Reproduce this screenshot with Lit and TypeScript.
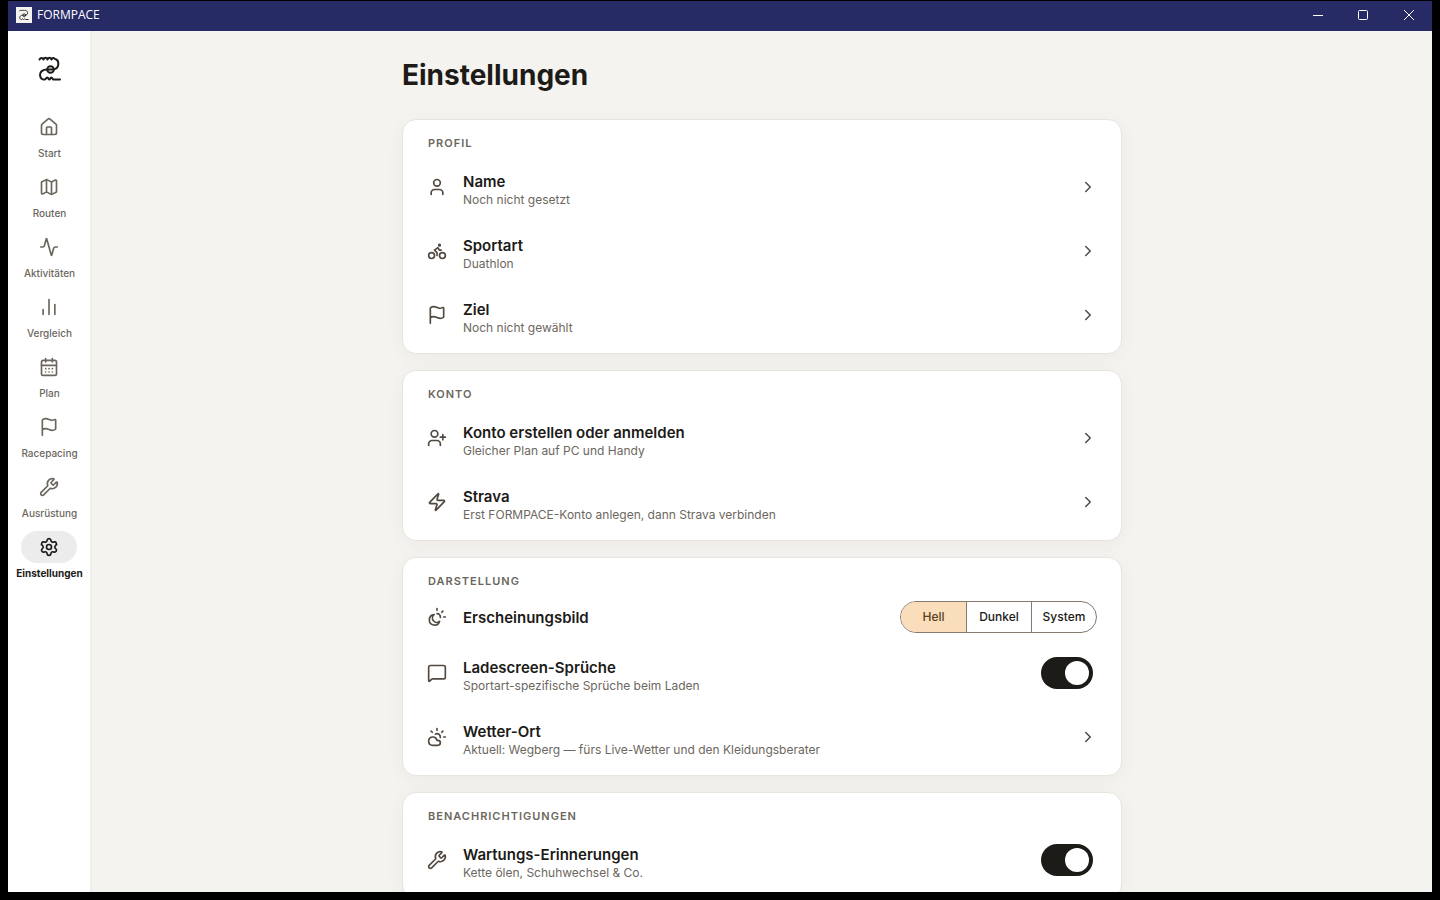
import { LitElement, html, css, svg, nothing } from "lit";
import { customElement, property, state } from "lit/decorators.js";

const sun = svg`<path d="M12 2v2"/><path d="m19.07 4.93-1.41 1.41"/><path d="M20 12h2"/>`;

const ICONS: Record<string, unknown> = {
  house: svg`<path d="M15 21v-8a1 1 0 0 0-1-1h-4a1 1 0 0 0-1 1v8"/><path d="M3 10a2 2 0 0 1 .709-1.528l7-5.999a2 2 0 0 1 2.582 0l7 5.999A2 2 0 0 1 21 10v9a2 2 0 0 1-2 2H5a2 2 0 0 1-2-2z"/>`,
  map: svg`<path d="M14.106 5.553a2 2 0 0 0 1.788 0l3.659-1.83A1 1 0 0 1 21 4.619v12.764a1 1 0 0 1-.553.894l-4.553 2.277a2 2 0 0 1-1.788 0l-4.212-2.106a2 2 0 0 0-1.788 0l-3.659 1.83A1 1 0 0 1 3 19.381V6.618a1 1 0 0 1 .553-.894l4.553-2.277a2 2 0 0 1 1.788 0z"/><path d="M15 5.764v15"/><path d="M9 3.236v15"/>`,
  activity: svg`<path d="M22 12h-2.48a2 2 0 0 0-1.93 1.46l-2.35 8.36a.25.25 0 0 1-.48 0L9.24 2.18a.25.25 0 0 0-.48 0l-2.35 8.36A2 2 0 0 1 4.49 12H2"/>`,
  chart: svg`<path d="M5 21v-6"/><path d="M12 21V3"/><path d="M19 21V9"/>`,
  calendar: svg`<path d="M8 2v4"/><path d="M16 2v4"/><rect width="18" height="18" x="3" y="4" rx="2"/><path d="M3 10h18"/><path d="M8 14h.01"/><path d="M12 14h.01"/><path d="M16 14h.01"/><path d="M8 18h.01"/><path d="M12 18h.01"/><path d="M16 18h.01"/>`,
  flag: svg`<path d="M4 22V4a1 1 0 0 1 .4-.8A6 6 0 0 1 8 2c3 0 5 2 7.333 2q2 0 3.067-.8A1 1 0 0 1 20 4v10a1 1 0 0 1-.4.8A6 6 0 0 1 16 16c-3 0-5-2-8-2a6 6 0 0 0-4 1.528"/>`,
  wrench: svg`<path d="M14.7 6.3a1 1 0 0 0 0 1.4l1.6 1.6a1 1 0 0 0 1.4 0l3.106-3.105c.32-.322.863-.22.983.218a6 6 0 0 1-8.259 7.057l-7.91 7.91a1 1 0 0 1-2.999-3l7.91-7.91a6 6 0 0 1 7.057-8.259c.438.12.54.662.219.984z"/>`,
  settings: svg`<path d="M9.671 4.136a2.34 2.34 0 0 1 4.659 0 2.34 2.34 0 0 0 3.319 1.915 2.34 2.34 0 0 1 2.33 4.033 2.34 2.34 0 0 0 0 3.831 2.34 2.34 0 0 1-2.33 4.033 2.34 2.34 0 0 0-3.319 1.915 2.34 2.34 0 0 1-4.659 0 2.34 2.34 0 0 0-3.32-1.915 2.34 2.34 0 0 1-2.33-4.033 2.34 2.34 0 0 0 0-3.831A2.34 2.34 0 0 1 6.35 6.051a2.34 2.34 0 0 0 3.319-1.915"/><circle cx="12" cy="12" r="3"/>`,
  user: svg`<path d="M19 21v-2a4 4 0 0 0-4-4H9a4 4 0 0 0-4 4v2"/><circle cx="12" cy="7" r="4"/>`,
  bike: svg`<circle cx="18.5" cy="17.5" r="3.5"/><circle cx="5.5" cy="17.5" r="3.5"/><circle cx="15" cy="5" r="1"/><path d="M12 17.5V14l-3-3 4-3 2 3h2"/>`,
  userPlus: svg`<path d="M16 21v-2a4 4 0 0 0-4-4H6a4 4 0 0 0-4 4v2"/><circle cx="9" cy="7" r="4"/><path d="M19 8v6"/><path d="M22 11h-6"/>`,
  zap: svg`<path d="M4 14a1 1 0 0 1-.78-1.63l9.9-10.2a.5.5 0 0 1 .86.46l-1.92 6.02A1 1 0 0 0 13 10h7a1 1 0 0 1 .78 1.63l-9.9 10.2a.5.5 0 0 1-.86-.46l1.92-6.02A1 1 0 0 0 11 14z"/>`,
  sunMoon: svg`${sun}<path d="M16 12.600a4 4 0 0 0-4-4.600"/><path d="M8.500 9.100a6.300 6.300 0 1 0 6.600 8.200 5.200 5.200 0 0 1-6.600-8.200z"/>`,
  message: svg`<path d="M22 17a2 2 0 0 1-2 2H6.828a2 2 0 0 0-1.414.586l-2.202 2.202A.71.71 0 0 1 2 21.286V5a2 2 0 0 1 2-2h16a2 2 0 0 1 2 2z"/>`,
  cloudSun: svg`${sun}<path d="m4.930 4.930 1.410 1.410"/><path d="M15.947 12.650a4 4 0 0 0-5.925-4.128"/><path d="M13 22H7a5 5 0 1 1 4.900-6H13a3 3 0 0 1 0 6Z"/>`,
  chevron: svg`<path d="m9 18 6-6-6-6"/>`,
};

const icon = (name: string, size = 20) => html`<svg
  width=${size} height=${size} viewBox="0 0 24 24" fill="none" stroke="currentColor"
  stroke-width="2" stroke-linecap="round" stroke-linejoin="round" aria-hidden="true"
>${ICONS[name]}</svg>`;

const logo = (size: number) => html`<svg
  width=${size} height=${size} viewBox="0 0 28 28" fill="none" stroke="currentColor"
  stroke-width="2" stroke-linecap="round" stroke-linejoin="round" aria-hidden="true"
><path d="M3.500 4.500C4.500 2.500 6.500 2.200 7.500 4.500C8.500 2.200 10.500 2.200 11.500 4.500C12.500 2.200 14.500 2.200 15.500 4.500C16.500 2.500 18 2.500 19 4C21.500 4.500 22.500 7 22.300 9.500C22 13 19.500 14.500 16 14.500H11C6.500 14.500 3.800 17 4 20C4.200 23.500 6.500 25 9 24.500C10 24.500 10 22.500 11.300 22.500C12.500 22.500 12.300 24.500 13.300 24.500C14.300 24.500 14.200 22.500 15.300 22.500C16.500 22.500 16.300 24.500 17.500 24.500H24"/><circle cx="14.500" cy="14.500" r="3.300"/></svg>`;

interface Row {
  icon: string;
  title: string;
  sub?: string;
  kind: "link" | "toggle" | "theme";
}

const SECTIONS: { label: string; rows: Row[] }[] = [
  {
    label: "PROFIL",
    rows: [
      { icon: "user", title: "Name", sub: "Noch nicht gesetzt", kind: "link" },
      { icon: "bike", title: "Sportart", sub: "Duathlon", kind: "link" },
      { icon: "flag", title: "Ziel", sub: "Noch nicht gewählt", kind: "link" },
    ],
  },
  {
    label: "KONTO",
    rows: [
      { icon: "userPlus", title: "Konto erstellen oder anmelden", sub: "Gleicher Plan auf PC und Handy", kind: "link" },
      { icon: "zap", title: "Strava", sub: "Erst FORMPACE-Konto anlegen, dann Strava verbinden", kind: "link" },
    ],
  },
  {
    label: "DARSTELLUNG",
    rows: [
      { icon: "sunMoon", title: "Erscheinungsbild", kind: "theme" },
      { icon: "message", title: "Ladescreen-Sprüche", sub: "Sportart-spezifische Sprüche beim Laden", kind: "toggle" },
      { icon: "cloudSun", title: "Wetter-Ort", sub: "Aktuell: Wegberg — fürs Live-Wetter und den Kleidungsberater", kind: "link" },
    ],
  },
  {
    label: "BENACHRICHTIGUNGEN",
    rows: [
      { icon: "wrench", title: "Wartungs-Erinnerungen", sub: "Kette ölen, Schuhwechsel & Co.", kind: "toggle" },
    ],
  },
];

const NAV = [
  ["house", "Start"],
  ["map", "Routen"],
  ["activity", "Aktivitäten"],
  ["chart", "Vergleich"],
  ["calendar", "Plan"],
  ["flag", "Racepacing"],
  ["wrench", "Ausrüstung"],
  ["settings", "Einstellungen"],
];

@customElement("title-bar")
export class TitleBar extends LitElement {
  static styles = css`
    :host {
      display: flex;
      align-items: center;
      height: 30px;
      flex: none;
      padding-left: 8px;
      background: #262b66;
      color: #fff;
      font: 12px/16px "Open Sans", "Noto Sans", sans-serif;
    }
    .badge {
      display: grid;
      place-items: center;
      width: 16px;
      height: 16px;
      margin-right: 5px;
      background: #f5f3ef;
      color: #1c1b18;
    }
    .name { flex: 1; }
    .badge, .name { margin-bottom: 2px; }
    .control {
      display: grid;
      place-items: center;
      width: 46px;
      height: 30px;
      padding: 0 0 2px;
      border: 0;
      background: none;
      color: inherit;
    }
  `;

  render() {
    const glyph = (label: string, shape: unknown) => html`<button class="control" aria-label=${label}>
      <svg width="12" height="12" viewBox="0 0 12 12" fill="none" stroke="currentColor">${shape}</svg>
    </button>`;
    return html`
      <span class="badge">${logo(12)}</span>
      <span class="name">FORMPACE</span>
      ${glyph("Minimieren", svg`<path d="M2 6.5h10"/>`)}
      ${glyph("Maximieren", svg`<rect x="1.500" y="1.500" width="9" height="9" rx="1"/>`)}
      ${glyph("Schließen", svg`<path d="m1 1 10 10M11 1 1 11"/>`)}
    `;
  }
}

@customElement("side-nav")
export class SideNav extends LitElement {
  static styles = css`
    :host {
      display: flex;
      flex-direction: column;
      align-items: center;
      flex: none;
      box-sizing: border-box;
      width: 84px;
      padding: 24px 0 0 1px;
      border-right: 2px solid #efeeea;
      background: #fff;
    }
    .logo { display: block; height: 28px; color: #1c1b18; }
    .items {
      display: flex;
      flex-direction: column;
      gap: 12px;
      margin-top: 28px;
    }
    .item {
      display: flex;
      flex-direction: column;
      align-items: center;
      gap: 4px;
      color: #6b675e;
      font-size: 10px;
      font-weight: 500;
      line-height: 12px;
      text-decoration: none;
    }
    .pill {
      display: grid;
      place-items: center;
      width: 56px;
      height: 32px;
      border-radius: 16px;
    }
    .item[aria-current] { color: #1c1b18; font-weight: 700; }
    .item[aria-current] .pill { background: #ececec; }
  `;

  render() {
    return html`
      <span class="logo">${logo(28)}</span>
      <nav class="items">
        ${NAV.map(
          ([name, label]) => html`<a class="item" href="#" aria-current=${label === "Einstellungen" ? "page" : nothing}>
            <span class="pill">${icon(name)}</span>${label}
          </a>`,
        )}
      </nav>
    `;
  }
}

@customElement("settings-card")
export class SettingsCard extends LitElement {
  @property() label = "";
  @property({ attribute: false }) rows: Row[] = [];
  @state() private theme = "Hell";

  static styles = css`
    :host {
      display: block;
      padding: 16px 24px 6px;
      border: 1px solid #e8e5df;
      border-radius: 14px;
      background: #fff;
      box-shadow: 0 4px 20px rgba(40, 30, 10, 0.04);
    }
    .label {
      margin: 0 0 5px;
      padding-left: 1px;
      color: #6b675e;
      font-size: 11px;
      font-weight: 600;
      line-height: 14px;
      letter-spacing: 1px;
    }
    .row {
      display: flex;
      align-items: center;
      gap: 16px;
      width: 100%;
      height: 64px;
      padding: 0;
      border: 0;
      background: none;
      color: #524940;
      font: inherit;
      text-align: left;
    }
    .row.single { height: 48px; }
    svg { display: block; flex: none; }
    .text { flex: 1; display: block; padding-top: 6px; }
    .single .text { padding-top: 2px; }
    .title {
      display: block;
      color: #1c1b18;
      font-size: 15px;
      font-weight: 600;
      line-height: 20px;
    }
    .sub {
      display: block;
      color: #6b675e;
      font-size: 12px;
      line-height: 16px;
    }
    .switch {
      appearance: none;
      display: flex;
      align-items: center;
      justify-content: flex-end;
      width: 52px;
      height: 32px;
      margin: 0 4px 0 0;
      padding: 4px;
      box-sizing: border-box;
      border-radius: 16px;
      background: #1c1b18;
    }
    .switch::before {
      content: "";
      width: 24px;
      height: 24px;
      border-radius: 12px;
      background: #fff;
    }
    .switch:not(:checked) { justify-content: flex-start; background: #a09a90; }
    .segments {
      display: grid;
      grid-template-columns: repeat(3, 1fr);
      width: 197px;
      height: 32px;
      box-sizing: border-box;
      border: 1px solid #857a6e;
      border-radius: 16px;
      overflow: hidden;
    }
    .segment {
      display: grid;
      place-items: center;
      padding-bottom: 2px;
      color: #1c1b18;
      font-size: 12px;
      font-weight: 500;
    }
    .segment + .segment { border-left: 1px solid #857a6e; }
    .segment.on { background: #faddba; color: #57431f; }
    .segment input { position: absolute; opacity: 0; pointer-events: none; }
  `;

  private segments() {
    return html`<div class="segments" role="radiogroup" aria-label="Erscheinungsbild">
      ${["Hell", "Dunkel", "System"].map(
        (name) => html`<label class="segment ${name === this.theme ? "on" : ""}">
          <input type="radio" name="theme" .checked=${name === this.theme} @change=${() => (this.theme = name)} />${name}
        </label>`,
      )}
    </div>`;
  }

  private row(row: Row) {
    const body = html`${icon(row.icon)}
      <span class="text"><span class="title">${row.title}</span>${row.sub ? html`<span class="sub">${row.sub}</span>` : nothing}</span>`;
    if (row.kind === "theme") return html`<div class="row single">${body}${this.segments()}</div>`;
    if (row.kind === "toggle") return html`<label class="row">${body}<input class="switch" type="checkbox" role="switch" checked /></label>`;
    return html`<button class="row">${body}${icon("chevron", 18)}</button>`;
  }

  render() {
    return html`<h2 class="label">${this.label}</h2>${this.rows.map((r) => this.row(r))}`;
  }
}

@customElement("app-root")
export class AppRoot extends LitElement {
  static styles = css`
    :host {
      display: flex;
      flex-direction: column;
      box-sizing: border-box;
      height: 100vh;
      padding: 1px 8px 8px;
      background: #000;
      font-family: Inter, sans-serif;
    }
    .body { display: flex; flex: 1; min-height: 0; background: #f5f3ef; }
    .page { flex: 1; overflow: hidden; padding: 26px 24px 0; }
    .column {
      display: flex;
      flex-direction: column;
      gap: 16px;
      max-width: 720px;
      margin: 0 auto;
    }
    .heading {
      margin: 0 0 10px;
      color: #1c1b18;
      font-size: 28px;
      font-weight: 700;
      line-height: 36px;
    }
  `;

  render() {
    return html`
      <title-bar></title-bar>
      <div class="body">
        <side-nav></side-nav>
        <main class="page">
          <div class="column">
            <h1 class="heading">Einstellungen</h1>
            ${SECTIONS.map((s) => html`<settings-card .label=${s.label} .rows=${s.rows}></settings-card>`)}
          </div>
        </main>
      </div>
    `;
  }
}
